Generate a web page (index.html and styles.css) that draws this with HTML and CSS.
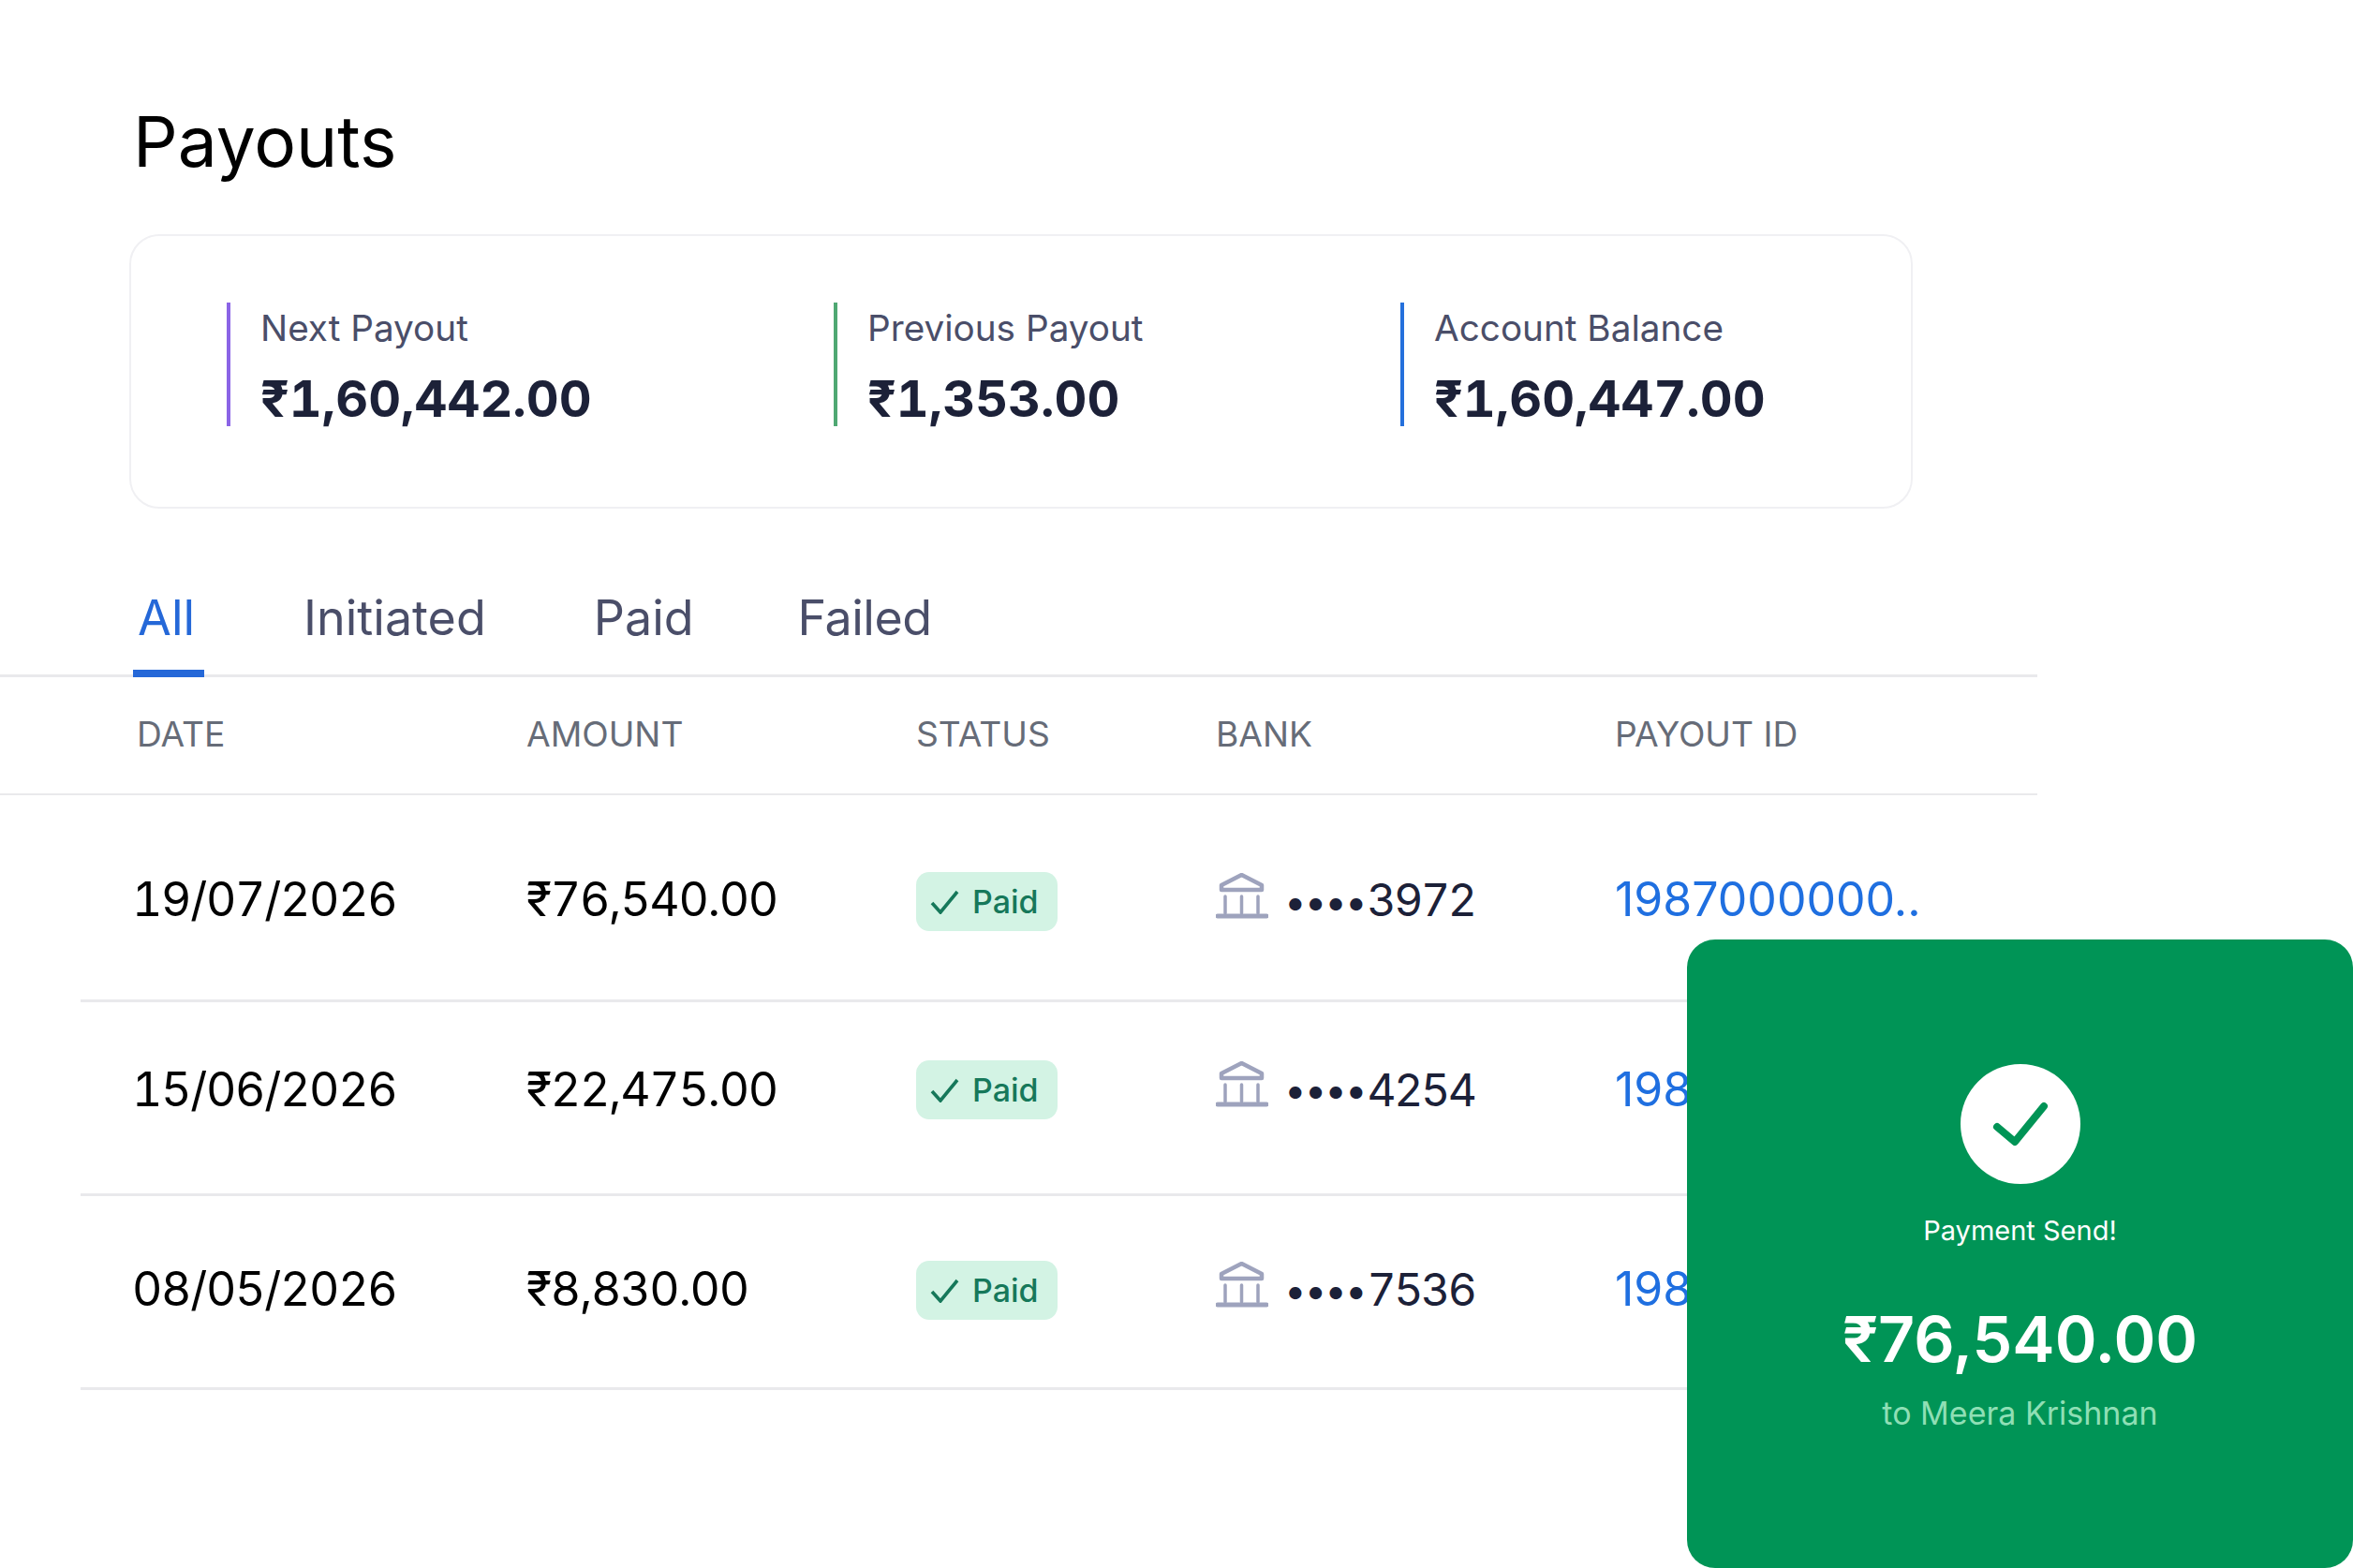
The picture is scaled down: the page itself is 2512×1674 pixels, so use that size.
FILE: index.html
```html
<!DOCTYPE html>
<html lang="en">
<head>
<meta charset="utf-8">
<title>Payouts</title>
<link rel="stylesheet" href="styles.css">
</head>
<body>
<main class="page">
  <h1 class="title">Payouts</h1>

  <section class="summary">
    <div class="stat stat-next">
      <span class="stat-label">Next Payout</span>
      <strong class="stat-value">₹1,60,442.00</strong>
    </div>
    <div class="stat stat-prev">
      <span class="stat-label">Previous Payout</span>
      <strong class="stat-value">₹1,353.00</strong>
    </div>
    <div class="stat stat-balance">
      <span class="stat-label">Account Balance</span>
      <strong class="stat-value">₹1,60,447.00</strong>
    </div>
  </section>

  <nav class="tabs">
    <a class="tab tab-active">All</a>
    <a class="tab">Initiated</a>
    <a class="tab">Paid</a>
    <a class="tab tab-last">Failed</a>
  </nav>

  <div class="table-head cols">
    <span class="head-date">DATE</span>
    <span>AMOUNT</span>
    <span>STATUS</span>
    <span>BANK</span>
    <span>PAYOUT ID</span>
  </div>

  <div class="row row-a cols">
    <span class="cell date">19/07/2026</span>
    <span class="cell amount">₹76,540.00</span>
    <span class="badge"><svg class="badge-check" viewBox="0 0 31 26"><path d="M2 14l9 10L29 2"/></svg>Paid</span>
    <span class="bank">
      <svg class="bank-icon" viewBox="0 0 56 50"><path class="roof" d="M6 18v-5L27.5 2 49 13v5z"/><path class="pillars" d="M10 25v18M27.5 25v18M45 25v18"/><path class="base" d="M2 46h52"/></svg>
      <span class="dots">••••</span><span class="cell acct">3972</span>
    </span>
    <a class="cell payout-id">1987000000..</a>
  </div>

  <div class="row row-b cols">
    <span class="cell date">15/06/2026</span>
    <span class="cell amount">₹22,475.00</span>
    <span class="badge"><svg class="badge-check" viewBox="0 0 31 26"><path d="M2 14l9 10L29 2"/></svg>Paid</span>
    <span class="bank">
      <svg class="bank-icon" viewBox="0 0 56 50"><path class="roof" d="M6 18v-5L27.5 2 49 13v5z"/><path class="pillars" d="M10 25v18M27.5 25v18M45 25v18"/><path class="base" d="M2 46h52"/></svg>
      <span class="dots">••••</span><span class="cell acct">4254</span>
    </span>
    <a class="cell payout-id">1987000000..</a>
  </div>

  <div class="row row-c cols">
    <span class="cell date">08/05/2026</span>
    <span class="cell amount">₹8,830.00</span>
    <span class="badge"><svg class="badge-check" viewBox="0 0 31 26"><path d="M2 14l9 10L29 2"/></svg>Paid</span>
    <span class="bank">
      <svg class="bank-icon" viewBox="0 0 56 50"><path class="roof" d="M6 18v-5L27.5 2 49 13v5z"/><path class="pillars" d="M10 25v18M27.5 25v18M45 25v18"/><path class="base" d="M2 46h52"/></svg>
      <span class="dots">••••</span><span class="cell acct">7536</span>
    </span>
    <a class="cell payout-id">1987000000..</a>
  </div>

  <aside class="toast">
    <span class="toast-circle"><svg class="toast-check" viewBox="0 0 128 128"><path d="M39 67l19 16 31-38"/></svg></span>
    <p class="toast-msg">Payment Send!</p>
    <p class="toast-amount">₹76,540.00</p>
    <p class="toast-to">to Meera Krishnan</p>
  </aside>
</main>
</body>
</html>
```

FILE: styles.css
```css
* { box-sizing: border-box; }
html, body { margin: 0; padding: 0; background: #fff; }
.page {
  position: relative;
  width: 2512px;
  height: 1674px;
  overflow: hidden;
  background: #fff;
  font-family: "Inter", "Noto Sans", sans-serif;
  color: #1c2138;
}
.title {
  margin: 0;
  padding: 107px 0 0 142px;
  height: 250px;
  font-size: 74.8px;
  line-height: 88px;
  font-weight: 400;
  color: #000;
}
.summary {
  display: flex;
  width: 1904px;
  height: 293px;
  margin-left: 138px;
  padding: 71px 0 0 102px;
  border: 2px solid #f0f0f3;
  border-radius: 32px;
}
.stat {
  display: flex;
  flex-direction: column;
  height: 132px;
  padding-left: 32px;
  border-left: 4px solid;
}
.stat-next { width: 648px; border-color: #8b64e6; }
.stat-prev { width: 605px; border-color: #4fa873; }
.stat-balance { border-color: #2470dc; }
.stat-label {
  font-size: 38.7px;
  line-height: 44px;
  margin-top: 5px;
  color: #4a4e69;
}
.stat-value {
  font-size: 54px;
  line-height: 66px;
  margin-top: 21px;
  font-weight: 700;
  font-variant-numeric: tabular-nums;
  color: #1c2138;
}
.tabs {
  display: flex;
  gap: 105px;
  height: 180px;
  padding: 0 0 0 142px;
  width: 2175px;
  border-bottom: 3px solid #e9e9ec;
}
.tab {
  height: 180px;
  padding: 87px 5px 0;
  font-size: 52px;
  line-height: 60px;
  color: #4a4e69;
}
.tab-active {
  width: 76px;
  margin-right: -4px;
  color: #2568d8;
  border-bottom: 8px solid #2568d8;
}
.tab-last { margin-left: -4px; letter-spacing: -0.5px; }
.cols {
  display: grid;
  grid-template-columns: 421px 416px 320px 426px 1fr;
  align-items: center;
}
.table-head {
  width: 2175px;
  height: 126px;
  padding: 0 0 3px 141px;
  border-bottom: 2px solid #e9e9ec;
  font-size: 37.2px;
  color: #666c78;
}
.head-date { padding-left: 5px; }
.row {
  width: 2089px;
  margin-left: 86px;
  padding-left: 55px;
  border-bottom: 3px solid #e9e9ec;
  font-size: 50px;
  line-height: 63px;
}
.row-a { padding-top: 82px; padding-bottom: 73px; }
.row-b { padding-top: 62px; padding-bottom: 79px; }
.row-c { padding-top: 69px; padding-bottom: 72px; }
.cell { margin: -2px 0 2px; }
.row-b .cell { margin: 0; }
.row-c .cell { margin: -1px 0 1px; }
.date, .amount { color: #000; font-variant-numeric: tabular-nums; letter-spacing: -1.3px; }
.badge {
  display: flex;
  align-items: center;
  width: 151px;
  height: 63px;
  padding-left: 15px;
  border-radius: 14px;
  background: #d3f3e4;
  color: #16785a;
  font-size: 34px;
  font-weight: 500;
}
.badge-check {
  width: 31px;
  height: 26px;
  margin-right: 14px;
  fill: none;
  stroke: #16785a;
  stroke-width: 3.6;
}
.bank {
  display: flex;
  align-items: center;
  color: #1c2138;
}
.bank-icon {
  width: 56px;
  height: 50px;
  margin: 0 17px 12px 0;
  fill: none;
  stroke: #9ea3bd;
  stroke-linecap: round;
  stroke-linejoin: round;
}
.roof { stroke-width: 4.5; }
.pillars { stroke-width: 3.5; }
.base { stroke-width: 5; }
.dots { font-size: 42px; letter-spacing: -2px; margin-right: 2px; }
.acct { font-size: 48px; font-variant-numeric: tabular-nums; letter-spacing: -2.4px; }
.payout-id { color: #1f6fe0; }
.toast {
  position: absolute;
  left: 1801px;
  top: 1003px;
  width: 711px;
  height: 671px;
  padding-top: 133px;
  border-radius: 30px;
  background: #009456;
  color: #fff;
  text-align: center;
}
.toast-circle {
  display: block;
  width: 128px;
  height: 128px;
  margin: 0 auto;
  border-radius: 50%;
  background: #fff;
}
.toast-check {
  display: block;
  width: 128px;
  height: 128px;
  fill: none;
  stroke: #009456;
  stroke-width: 8;
  stroke-linecap: round;
  stroke-linejoin: round;
}
.toast-msg { margin: 30px 0 0; font-size: 29px; line-height: 40px; }
.toast-amount { margin: 53px 0 0; font-size: 68px; line-height: 84px; font-weight: 600; }
.toast-to { margin: 16px 0 0; font-size: 34px; line-height: 44px; color: #8fdfb5; }
```
